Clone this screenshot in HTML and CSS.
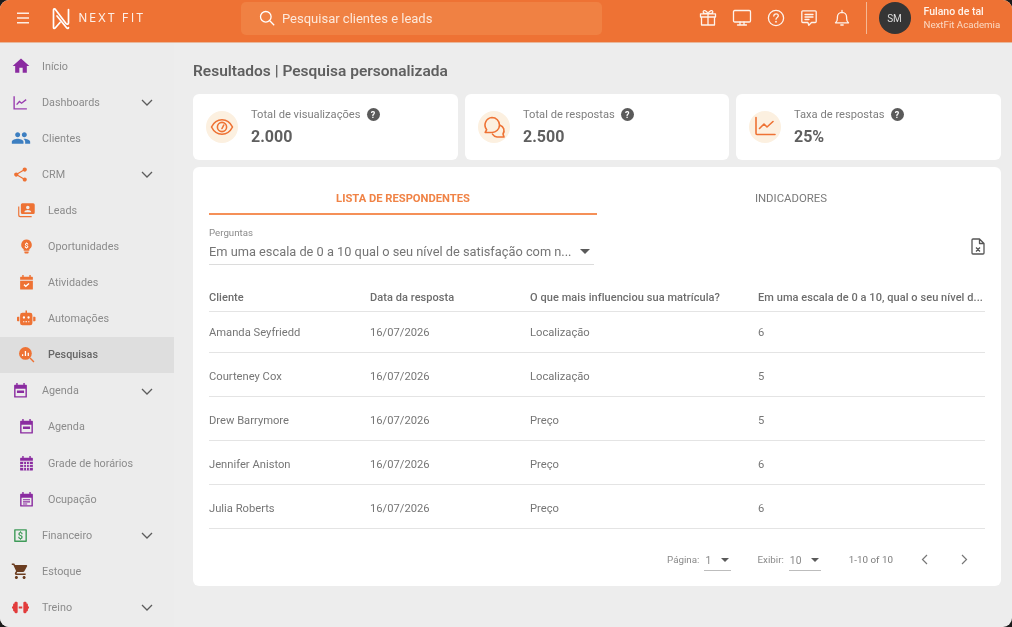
FILE: index.html
```html
<!DOCTYPE html>
<html lang="pt-BR">
<head>
<meta charset="utf-8">
<title>Next Fit</title>
<link rel="stylesheet" href="styles.css">
</head>
<body>
<div class="app">
  <header class="topbar">
    <svg class="burger" viewBox="0 0 14 12"><path d="M1 1.200h12M1 6h12M1 10.800h12"/></svg>
    <div class="logo">
      <svg class="logo-mark" viewBox="0 0 20 23"><path d="M2.500 20.500V3c0-1.300 1.100-1.600 1.900-.6L15 16.500c1 1.200 2.500.8 2.500-.6V2.500M2.500 20.500c0 1 1 1.300 1.700.5L9 15.500M17.500 20.500c0 1-1 1.300-1.700.5L6 9"/></svg>
      <span class="logo-text">NEXT FIT</span>
    </div>
    <div class="search">
      <svg class="search-ico" viewBox="0 0 16 16"><circle cx="6.800" cy="6.800" r="5.300"/><path d="m10.800 10.800 4.400 4.400"/></svg>
      <span>Pesquisar clientes e leads</span>
    </div>
    <div class="top-icons">
      <svg class="top-ico" viewBox="0 0 18 18"><path d="M2.500 8v8h13V8M1.500 4.800h15V8h-15zM9 4.800V16M9 4.800C7.500 1 4.200.8 4.200 3c0 1.400 2 1.800 4.800 1.800zM9 4.800c1.500-3.800 4.800-4 4.800-1.800 0 1.400-2 1.800-4.800 1.800z"/></svg>
      <svg class="top-ico wide" viewBox="0 0 20 18"><rect x="1.500" y="1.500" width="17" height="11.500" rx="1.200"/><path d="M8 13v2.800M12 13v2.800M5.500 16h9"/></svg>
      <svg class="top-ico" viewBox="0 0 18 18"><circle cx="9" cy="9" r="7.600"/><path d="M6.800 7c.1-1.400 1-2.200 2.300-2.200 1.300 0 2.200.8 2.200 1.900 0 1.700-2.300 1.700-2.300 3.500"/><path d="M9 12.300v.9"/></svg>
      <svg class="top-ico" viewBox="0 0 18 18"><path d="M2.800 1.800h12.400c.6 0 1 .4 1 1v9.700c0 .6-.4 1-1 1h-3.700L8.800 16.300 7.900 13.500H2.800c-.6 0-1-.4-1-1V2.800c0-.6.4-1 1-1zM5 5.500h8M5 8h8M5 10.500h4"/></svg>
      <svg class="top-ico" viewBox="0 0 18 18"><path d="M2.500 13.800c1.300-1 1.900-2.100 1.900-4.300V8a4.600 4.600 0 0 1 9.200 0v1.500c0 2.200.6 3.300 1.900 4.300zM9 1.500v2M7.800 16h2.400"/></svg>
    </div>
    <span class="top-div"></span>
    <div class="avatar">SM</div>
    <div class="user">
      <strong>Fulano de tal</strong>
      <span>NextFit Academia</span>
    </div>
  </header>

  <div class="body">
    <nav class="sidebar">
      <a class="item"><svg class="ico s20 purple" viewBox="0 0 24 24"><path d="M10 20v-6h4v6h5v-8h3L12 3 2 12h3v8z"/></svg><span>Início</span></a>
      <a class="item"><svg class="ico line-purple" viewBox="0 0 24 24"><path d="M3 3v18h18M6.500 15l4-4.500 3 2.500L20 8"/></svg><span>Dashboards</span><svg class="chev" viewBox="0 0 12 7"><path d="m1 1 5 5 5-5"/></svg></a>
      <a class="item"><svg class="ico s20 blue" viewBox="0 0 24 24"><path d="M16 11c1.660 0 2.990-1.340 2.990-3S17.660 5 16 5c-1.660 0-3 1.340-3 3s1.340 3 3 3zm-8 0c1.660 0 2.990-1.340 2.990-3S9.660 5 8 5C6.340 5 5 6.340 5 8s1.340 3 3 3zm0 2c-2.330 0-7 1.170-7 3.500V19h14v-2.500c0-2.330-4.670-3.500-7-3.500zm8 0c-.29 0-.62.02-.97.05 1.160.84 1.970 1.970 1.970 3.450V19h6v-2.500c0-2.330-4.670-3.500-7-3.500z"/></svg><span>Clientes</span></a>
      <a class="item"><svg class="ico orange" viewBox="0 0 24 24"><path d="M18 16.080c-.76 0-1.440.3-1.960.77L8.910 12.700c.05-.23.09-.46.09-.7s-.04-.47-.09-.7l7.050-4.110c.54.5 1.250.81 2.040.81 1.660 0 3-1.340 3-3s-1.340-3-3-3-3 1.340-3 3c0 .24.04.47.09.7L8.040 9.810C7.500 9.310 6.790 9 6 9c-1.660 0-3 1.340-3 3s1.340 3 3 3c.79 0 1.500-.31 2.040-.81l7.120 4.160c-.05.21-.08.43-.08.65 0 1.610 1.310 2.920 2.920 2.920 1.610 0 2.920-1.310 2.920-2.920s-1.310-2.920-2.920-2.920z"/></svg><span>CRM</span><svg class="chev" viewBox="0 0 12 7"><path d="m1 1 5 5 5-5"/></svg></a>

      <a class="item sub"><svg class="ico s18 orange" viewBox="0 0 24 24"><path d="M7 3h14a2 2 0 0 1 2 2v10a2 2 0 0 1-2 2H7a2 2 0 0 1-2-2V5a2 2 0 0 1 2-2zm7 3a2.300 2.300 0 1 0 0 4.600A2.300 2.300 0 0 0 14 6zm-4.500 8.500h9c0-1.800-2.500-2.800-4.500-2.800s-4.500 1-4.500 2.800z"/><path d="M3 7H1.500v11.500A2.500 2.500 0 0 0 4 21h15v-1.500H4.500a1.500 1.500 0 0 1-1.500-1.500z"/></svg><span>Leads</span></a>
      <a class="item sub"><svg class="ico orange" viewBox="0 0 24 24"><path fill-rule="evenodd" d="M12 2a7.500 7.500 0 0 1 4 13.800V18H8v-2.200A7.500 7.500 0 0 1 12 2zM9 19h6v1.500a1.500 1.500 0 0 1-1.500 1.500h-3A1.500 1.500 0 0 1 9 20.500z"/><text class="bulb" x="12" y="13.500" text-anchor="middle">$</text></svg><span>Oportunidades</span></a>
      <a class="item sub"><svg class="ico orange" viewBox="0 0 24 24"><path d="M6 1.500h2V4h8V1.500h2V4h2a1 1 0 0 1 1 1v3H3V5a1 1 0 0 1 1-1h2zM3 9.500h18V21a1 1 0 0 1-1 1H4a1 1 0 0 1-1-1z"/><path class="cut" d="m8.500 15 2.500 2.500 4.500-4"/></svg><span>Atividades</span></a>
      <a class="item sub"><svg class="ico s18 orange" viewBox="0 0 24 24"><path d="M11 2h2v3h4a3 3 0 0 1 3 3v10a3 3 0 0 1-3 3H7a3 3 0 0 1-3-3V8a3 3 0 0 1 3-3h4zM1 10h2v6H1a1 1 0 0 1-1-1v-4a1 1 0 0 1 1-1zm20 0h2a1 1 0 0 1 1 1v4a1 1 0 0 1-1 1h-2z"/><circle class="cutf" cx="9" cy="11" r="1.500"/><circle class="cutf" cx="15" cy="11" r="1.500"/><path class="cut thin" d="M8 16.500h1.500m1.500 0h2m1.500 0H16"/></svg><span>Automações</span></a>
      <a class="item sub active"><svg class="ico orange" viewBox="0 0 24 24"><circle cx="10.500" cy="10.500" r="9"/><path class="cut thin2" d="M6.500 14v-2.500M10.500 14V7M14.500 14V9.500"/><path class="stroke-o" d="m17 17 5.500 5.500"/></svg><span>Pesquisas</span></a>

      <a class="item"><svg class="ico purple" viewBox="0 0 24 24"><path d="M6 1.500h2V4h8V1.500h2V4h2a1 1 0 0 1 1 1v16a1 1 0 0 1-1 1H4a1 1 0 0 1-1-1V5a1 1 0 0 1 1-1h2zM5 9.500V20h14V9.500z"/><path d="M7 12h10v3.500H7z"/></svg><span>Agenda</span><svg class="chev" viewBox="0 0 12 7"><path d="m1 1 5 5 5-5"/></svg></a>
      <a class="item sub"><svg class="ico purple" viewBox="0 0 24 24"><path d="M6 1.500h2V4h8V1.500h2V4h2a1 1 0 0 1 1 1v16a1 1 0 0 1-1 1H4a1 1 0 0 1-1-1V5a1 1 0 0 1 1-1h2zM5 9.500V20h14V9.500z"/><path d="M7 12h10v3.500H7z"/></svg><span>Agenda</span></a>
      <a class="item sub"><svg class="ico purple" viewBox="0 0 24 24"><path d="M6 1.500h2V4h8V1.500h2V4h2a1 1 0 0 1 1 1v3H3V5a1 1 0 0 1 1-1h2zM3 9.500h18V21a1 1 0 0 1-1 1H4a1 1 0 0 1-1-1z"/><path class="cut thin3" d="M3 13.500h18M3 17.500h18M8 9.500V22M12 9.500V22M16 9.500V22"/></svg><span>Grade de horários</span></a>
      <a class="item sub"><svg class="ico purple" viewBox="0 0 24 24"><path d="M6 1.500h2V4h8V1.500h2V4h2a1 1 0 0 1 1 1v16a1 1 0 0 1-1 1H4a1 1 0 0 1-1-1V5a1 1 0 0 1 1-1h2zM5 9.500V20h14V9.500z"/><path d="M7 11.500h10v1.700H7zM7 14.500h10v1.700H7zM7 17.500h6v1.500H7z"/></svg><span>Ocupação</span></a>

      <a class="item"><svg class="ico green" viewBox="0 0 24 24"><path fill-rule="evenodd" d="M4 3h16a1 1 0 0 1 1 1v16a1 1 0 0 1-1 1H4a1 1 0 0 1-1-1V4a1 1 0 0 1 1-1zm1 2v14h14V5z"/><text class="dollar" x="12" y="16.500" text-anchor="middle">$</text></svg><span>Financeiro</span><svg class="chev" viewBox="0 0 12 7"><path d="m1 1 5 5 5-5"/></svg></a>
      <a class="item"><svg class="ico s18 brown" viewBox="0 0 24 24"><path d="M7 18c-1.100 0-1.990.9-1.990 2S5.900 22 7 22s2-.9 2-2-.9-2-2-2zM1 2v2h2l3.600 7.590-1.350 2.450c-.16.28-.25.61-.25.96 0 1.100.9 2 2 2h12v-2H7.420c-.14 0-.25-.11-.25-.25l.03-.12.9-1.630h7.450c.75 0 1.410-.41 1.750-1.030l3.580-6.490c.08-.14.12-.31.12-.48 0-.55-.45-1-1-1H5.210l-.94-2H1zm16 16c-1.100 0-1.990.9-1.990 2s.89 2 1.990 2 2-.9 2-2-.9-2-2-2z"/></svg><span>Estoque</span></a>
      <a class="item"><svg class="ico red" viewBox="0 0 24 24"><path d="M0 10.500h1.500V8A1.500 1.500 0 0 1 3 6.500h.5V5.500A1.500 1.500 0 0 1 5 4h1.500A1.500 1.500 0 0 1 8 5.500v13A1.500 1.500 0 0 1 6.500 20H5a1.500 1.500 0 0 1-1.500-1.500v-1H3A1.500 1.500 0 0 1 1.500 16v-2.500H0zM24 10.500h-1.500V8A1.500 1.500 0 0 0 21 6.500h-.5V5.500A1.500 1.500 0 0 0 19 4h-1.500A1.500 1.500 0 0 0 16 5.500v13a1.500 1.500 0 0 0 1.500 1.500H19a1.500 1.500 0 0 0 1.500-1.500v-1h.5a1.500 1.500 0 0 0 1.500-1.500v-2.500H24zM9.500 10.750h5v2.500h-5z"/></svg><span>Treino</span><svg class="chev" viewBox="0 0 12 7"><path d="m1 1 5 5 5-5"/></svg></a>
    </nav>

    <main class="main">
      <h1 class="title">Resultados | Pesquisa personalizada</h1>

      <section class="cards">
        <article class="card">
          <div class="disc"><svg viewBox="0 0 24 24"><path d="M1.500 12C4 7 7.600 4.800 12 4.800S20 7 22.500 12C20 17 16.400 19.200 12 19.200S4 17 1.500 12z"/><circle cx="12" cy="12" r="4.600"/><path d="M12 13.500 13.800 10"/></svg></div>
          <div class="card-text">
            <div class="card-label">Total de visualizações <span class="help">?</span></div>
            <div class="card-value">2.000</div>
          </div>
        </article>
        <article class="card">
          <div class="disc"><svg viewBox="0 0 24 24"><path d="M10 2.500a7.500 7.500 0 0 1 0 15H3.200l1.500-2.800A7.500 7.500 0 0 1 10 2.500z"/><path d="M18 10.200a5.800 5.800 0 0 1 3 8.800l1 3h-7a6 6 0 0 1-4.500-2.800"/></svg></div>
          <div class="card-text">
            <div class="card-label">Total de respostas <span class="help">?</span></div>
            <div class="card-value">2.500</div>
          </div>
        </article>
        <article class="card">
          <div class="disc"><svg viewBox="0 0 24 24"><path d="M3 2.500V18.500a1 1 0 0 0 1 1h18"/><path d="M6.500 13.500 11 9l3 3 6-5.500"/></svg></div>
          <div class="card-text">
            <div class="card-label">Taxa de respostas <span class="help">?</span></div>
            <div class="card-value">25%</div>
          </div>
        </article>
      </section>

      <section class="panel">
        <div class="tabs">
          <div class="tab on">LISTA DE RESPONDENTES</div>
          <div class="tab">INDICADORES</div>
        </div>

        <div class="filter">
          <div class="field">
            <label>Perguntas</label>
            <div class="select">
              <span class="select-text">Em uma escala de 0 a 10 qual o seu nível de satisfação com n...</span>
              <i class="caret big"></i>
            </div>
          </div>
          <svg class="export" viewBox="0 0 14 17"><path d="M2 1h6.500L13 5.500V15a1 1 0 0 1-1 1H2a1 1 0 0 1-1-1V2a1 1 0 0 1 1-1zM8.500 1v4.500H13M5 9.500l4 4M9 9.500l-4 4"/></svg>
        </div>

        <table class="grid">
          <colgroup><col class="c1"><col class="c2"><col class="c3"><col class="c4"></colgroup>
          <thead>
            <tr><th>Cliente</th><th>Data da resposta</th><th>O que mais influenciou sua matrícula?</th><th>Em uma escala de 0 a 10, qual o seu nível d...</th></tr>
          </thead>
          <tbody>
            <tr><td>Amanda Seyfriedd</td><td>16/07/2026</td><td>Localização</td><td>6</td></tr>
            <tr><td>Courteney Cox</td><td>16/07/2026</td><td>Localização</td><td>5</td></tr>
            <tr><td>Drew Barrymore</td><td>16/07/2026</td><td>Preço</td><td>5</td></tr>
            <tr><td>Jennifer Aniston</td><td>16/07/2026</td><td>Preço</td><td>6</td></tr>
            <tr><td>Julia Roberts</td><td>16/07/2026</td><td>Preço</td><td>6</td></tr>
          </tbody>
        </table>

        <footer class="pager">
          <span class="pg-label">Página:</span>
          <span class="pg-select p1"><b>1</b><i class="caret"></i></span>
          <span class="pg-label l2">Exibir:</span>
          <span class="pg-select p2"><b>10</b><i class="caret"></i></span>
          <span class="pg-range">1-10 of 10</span>
          <svg class="pg-arrow a1" viewBox="0 0 7 11"><path d="M6 1 1.500 5.500 6 10"/></svg>
          <svg class="pg-arrow a2" viewBox="0 0 7 11"><path d="M1 1l4.500 4.500L1 10"/></svg>
        </footer>
      </section>
    </main>
  </div>
</div>
</body>
</html>
```

FILE: styles.css
```css
* { box-sizing: border-box; }
html, body { margin: 0; height: 100%; background: #1c1c1c; overflow: hidden; }
body { font-family: Roboto, "Liberation Sans", sans-serif; color: #757575; }

.app {
  width: 1012px; height: 627px; background: #ededed;
  border-radius: 9px; overflow: hidden;
  display: flex; flex-direction: column;
  filter: blur(0.55px);
}

/* top bar */
.topbar {
  height: 43px; flex: none; background: #ee7234; padding-bottom: 6px;
  display: flex; align-items: center; color: #fff;
  border-bottom: 1px solid #e8b89c;
}
.burger { width: 14px; height: 12px; margin-left: 15.5px; fill: none; stroke: #fdeee4; stroke-width: 1.5; }
.logo { display: flex; align-items: center; margin-left: 21px; width: 190px; }
.logo-mark { width: 20px; height: 23px; fill: none; stroke: #fff; stroke-width: 1.7; stroke-linejoin: round; stroke-linecap: round; }
.logo-text { margin-left: 8px; font: 400 11.5px Inter, Roboto, sans-serif; letter-spacing: 2px; color: #fdf0e8; white-space: nowrap; }
.search {
  width: 361px; height: 33px; background: #f08143; border-radius: 5px;
  display: flex; align-items: center; padding-left: 18px; gap: 7.5px;
  font-size: 13px; color: #fde8da;
}
.search-ico { width: 16px; height: 16px; fill: none; stroke: #fff; stroke-width: 1.3; }
.top-icons { display: flex; align-items: center; margin-left: 97px; gap: 15px; }
.top-ico { width: 18px; height: 18px; fill: none; stroke: #fdf3ec; stroke-width: 1.3; stroke-linecap: round; stroke-linejoin: round; }
.top-ico.wide { width: 20px; }
.top-div { width: 1px; height: 32px; background: #f5b894; margin-left: 15px; }
.avatar {
  width: 32px; height: 32px; border-radius: 50%; background: #353535; color: #ddd;
  margin-left: 12px; display: flex; align-items: center; justify-content: center;
  font-size: 10px;
}
.user { margin-left: 13px; display: flex; flex-direction: column; gap: 1px; }
.user strong { font-size: 10.5px; font-weight: 500; line-height: 13px; color: #fff3eb; }
.user span { font-size: 9.7px; line-height: 12px; color: #fbd9c3; white-space: nowrap; }

.body { flex: 1; display: flex; min-height: 0; }

/* sidebar */
.sidebar { width: 174px; flex: none; padding-top: 5px; background: #ececec; }
.item {
  height: 36.1px; display: flex; align-items: center;
  padding-left: 12px; font-size: 10.8px; color: #8b8b8b;
  position: relative;
}
.item > span { margin-left: 13px; }
.item.sub { padding-left: 18px; }
.item.active { background: #dedede; color: #666; font-weight: 500; }
.ico { width: 17px; height: 17px; flex: none; }
.ico.s20 { width: 20px; height: 20px; margin: 0 -1.5px; }
.ico.s18 { width: 18.5px; height: 18.5px; margin: 0 -.75px; }
.purple { fill: #8a2ba0; }
.orange { fill: #ee7234; }
.blue { fill: #3d7fc1; }
.green { fill: #3f9b59; }
.brown { fill: #6b3d20; }
.red { fill: #e23c3c; }
.line-purple { fill: none; stroke: #9a3fb0; stroke-width: 2; }
.chev {
  position: absolute; left: 141px; top: 15px; width: 12px; height: 7px;
  fill: none; stroke: #5c5c5c; stroke-width: 1.3;
}
.cut { fill: none; stroke: #fff; stroke-width: 2; }
.cut.thin { stroke-width: 1.4; }
.cut.thin2 { stroke: #fff; stroke-width: 1.8; }
.cut.thin3 { stroke: #ececec; stroke-width: 1.3; }
.cutf { fill: #fff; }
.stroke-o { fill: none; stroke: #ee7234; stroke-width: 2; }
.bulb { font: 700 10px Roboto, sans-serif; fill: #fff; }
.dollar { font: 700 13px Roboto, sans-serif; fill: #3f9b59; }

/* main */
.main { flex: 1; min-width: 0; padding: 18px 11px 0 19px; }
.title {
  margin: 0 0 13px; font-size: 15.5px; line-height: 20px; font-weight: 600;
  color: #5f5f5f;
}
.cards { display: grid; grid-template-columns: 265px 264px 265px; gap: 7px; }
.card {
  height: 66px; background: #fff; border-radius: 6px; padding-left: 13px;
  display: flex; align-items: center; gap: 13px;
}
.disc {
  width: 32px; height: 32px; border-radius: 50%; background: #fcf0e0; flex: none;
  display: flex; align-items: center; justify-content: center;
}
.disc svg { width: 24px; height: 24px; fill: none; stroke: #ee7234; stroke-width: 1.6; stroke-linecap: round; stroke-linejoin: round; }
.card-text { display: flex; flex-direction: column; gap: 4px; }
.card-label { display: flex; align-items: center; gap: 6px; font-size: 11.15px; line-height: 14px; color: #7e7e7e; }
.help {
  width: 13px; height: 13px; border-radius: 50%; background: #5a5a5a; color: #fff;
  font-size: 9px; font-weight: 700; display: flex; align-items: center; justify-content: center;
}
.card-value { font-size: 16px; line-height: 20px; font-weight: 700; color: #5f5f5f; padding-top: 1px; }

.panel {
  height: 419px; margin-top: 7px; background: #fff; border-radius: 6px;
  padding: 0 16px;
}
.tabs { display: grid; grid-template-columns: 388px 388px; height: 48px; }
.tab {
  display: flex; align-items: center; justify-content: center; padding-top: 14px;
  font-size: 11.4px; color: #7a7a7a;
}
.tab.on { color: #f08346; font-weight: 700; border-bottom: 2px solid #f59058; font-size: 11.2px; padding-top: 16px; }

.filter { display: flex; align-items: flex-start; justify-content: space-between; padding-top: 12px; }
.field { width: 385px; }
.field label { display: block; font-size: 9.7px; line-height: 12px; color: #8a8a8a; }
.select {
  height: 26px; display: flex; align-items: center; justify-content: space-between;
  border-bottom: 1px solid #dcdcdc; padding: 0 4px 0 0;
  font-size: 12.8px; color: #757575;
}
.select-text { white-space: nowrap; }
.caret { width: 0; height: 0; display: block; border: 4px solid transparent; border-top-color: #5a5a5a; border-bottom: 0; }
.caret.big { border-width: 5.5px 5.5px 0; }
.export { width: 14px; height: 17px; margin-top: 11px; fill: none; stroke: #555; stroke-width: 1.3; stroke-linejoin: round; }

.grid { width: 776px; table-layout: fixed; border-collapse: collapse; margin-top: 17px; }
.c1 { width: 161px; }
.c2 { width: 160px; }
.c3 { width: 228px; }
.c4 { width: 227px; }
.grid th {
  height: 29px; text-align: left; padding: 3px 0 0; font-size: 11px; font-weight: 500;
  color: #6d6d6d; white-space: nowrap; border-bottom: 1px solid #e4e4e4; letter-spacing: .06px;
}
.grid td {
  height: 44px; padding: 4px 0 0; font-size: 11.2px; color: #767676;
  border-bottom: 1px solid #e4e4e4;
}
.grid tbody tr:first-child td { height: 41px; padding-top: 1px; }

.pager { display: flex; align-items: center; height: 61px; padding-top: 1px; font-size: 9.8px; color: #8a8a8a; }
.pg-label:first-child { margin-left: 458px; }
.pg-label.l2 { margin-left: 26px; }
.pg-select {
  height: 20px; display: flex; align-items: center; justify-content: space-between;
  border-bottom: 1px solid #bdbdbd; margin-left: 5px;
  font-size: 10.3px; position: relative; top: 1px;
}
.pg-select b { font-weight: 400; }
.p1 { width: 27px; padding: 0 2px 0 1px; }
.p2 { width: 32px; padding: 0 2px 0 1px; }
.pg-range { margin-left: 28px; color: #7d7d7d; font-size: 9.8px; }
.pg-arrow { width: 7px; height: 11px; fill: none; stroke: #777; stroke-width: 1.2; }
.a1 { margin-left: 28px; }
.a2 { margin-left: 33px; }
```
